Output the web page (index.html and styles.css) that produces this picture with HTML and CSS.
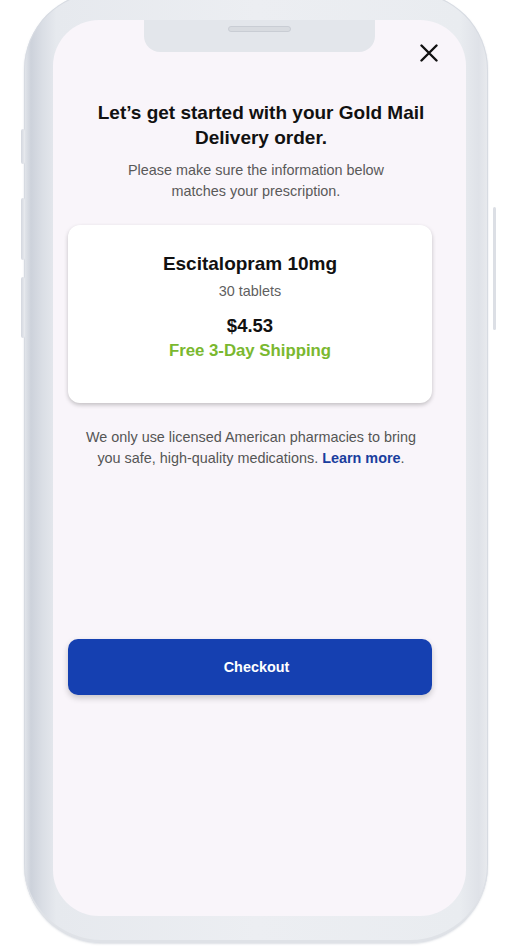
FILE: index.html
```html
<!DOCTYPE html>
<html lang="en">
<head>
<meta charset="utf-8">
<title>Gold Mail Delivery</title>
<link rel="stylesheet" href="styles.css">
</head>
<body>
<div class="phone">
  <span class="side-btn side-btn--1"></span>
  <span class="side-btn side-btn--2"></span>
  <span class="side-btn side-btn--3"></span>
  <span class="side-btn side-btn--r"></span>
  <div class="screen">
    <div class="notch"><span class="speaker"></span></div>
    <div class="topbar">
      <button class="close" aria-label="Close">
        <svg width="18" height="18" viewBox="0 0 18 18"><path d="M1.5 1.5 L16.5 16.5 M16.5 1.5 L1.5 16.5" stroke="#111" stroke-width="2.4" stroke-linecap="round"/></svg>
      </button>
    </div>
    <div class="content">
      <h1 class="title">Let’s get started with your Gold Mail Delivery order.</h1>
      <p class="subtitle">Please make sure the information below matches your prescription.</p>
      <div class="card">
        <div class="drug">Escitalopram 10mg</div>
        <div class="qty">30 tablets</div>
        <div class="price">$4.53</div>
        <div class="ship">Free 3-Day Shipping</div>
      </div>
      <p class="note">We only use licensed American pharmacies to bring you safe, high-quality medications. <a class="learn" href="#">Learn more</a>.</p>
      <button class="checkout">Checkout</button>
    </div>
  </div>
</div>
</body>
</html>
```
FILE: styles.css
```css
* { box-sizing: border-box; }
html, body { margin: 0; padding: 0; background: #ffffff; overflow: hidden; }
body { font-family: "Liberation Sans", Arial, sans-serif; width: 519px; height: 946px; }

.phone {
  position: relative;
  width: 464px;
  height: 951px;
  margin: -8px 0 0 24px;
  padding: 28px 22px 27px 29px;
  border-radius: 78px;
  background: linear-gradient(90deg, #e4e7ec 0%, #cdd2db 1.5%, #dadee5 4%, #e6e9ee 7%, #eceef2 50%, #e9ecf0 94%, #dfe2e8 98%, #e8eaee 100%);
  box-shadow: inset 0 -3px 0 #dfe2e7, inset 0 0 0 1px #d7dbe2, 0 1px 2px rgba(120,130,150,0.25);
}

.side-btn {
  position: absolute;
  width: 4px;
  background: linear-gradient(90deg, #d3d7df, #e9ebef);
  border-radius: 2px;
}
.side-btn--1 { left: -3px; top: 137px; height: 35px; }
.side-btn--2 { left: -3px; top: 206px; height: 62px; }
.side-btn--3 { left: -3px; top: 285px; height: 61px; }
.side-btn--r { right: -8px; top: 215px; height: 123px; width: 3px; background: #dcdfe5; }

.screen {
  position: relative;
  width: 100%;
  height: 100%;
  background: #f9f5fa;
  border-radius: 46px;
  overflow: hidden;
  padding-top: 24px;
}

.notch {
  position: absolute;
  left: 91px;
  top: 0;
  width: 231px;
  height: 32px;
  background: #e3e6eb;
  border-radius: 0 0 16px 16px;
  display: flex;
  justify-content: center;
  padding-top: 6px;
}
.speaker {
  width: 63px;
  height: 6px;
  border-radius: 3px;
  background: #d8dbe0;
  border: 1px solid #c9cdd4;
}

.topbar {
  display: flex;
  justify-content: flex-end;
  padding-right: 28px;
  height: 18px;
}
.close {
  width: 18px;
  height: 18px;
  padding: 0;
  border: 0;
  background: none;
  display: block;
}
.close svg { display: block; }

.content {
  width: 364px;
  margin-left: 15px;
  text-align: center;
}

.title {
  margin: 38px 0 0;
  padding: 0 0 0 22px;
  font-size: 19px;
  line-height: 25px;
  font-weight: 700;
  color: #111111;
}

.subtitle {
  margin: 10px 0 0;
  padding: 0 38px 0 50px;
  font-size: 14.4px;
  line-height: 21px;
  color: #595959;
}

.card {
  margin-top: 23px;
  background: #ffffff;
  border-radius: 12px;
  padding: 27px 0 41px;
  box-shadow: 0 2px 4px rgba(0,0,0,0.22);
}
.drug {
  font-size: 19px;
  line-height: 24px;
  font-weight: 700;
  color: #111111;
}
.qty {
  margin-top: 5px;
  font-size: 14.4px;
  line-height: 20px;
  color: #5f5f5f;
}
.price {
  margin-top: 13px;
  font-size: 18.5px;
  line-height: 24px;
  font-weight: 700;
  color: #111111;
}
.ship {
  margin-top: 2px;
  font-size: 16.8px;
  line-height: 22px;
  font-weight: 700;
  color: #7ab82f;
}

.note {
  margin: 24px 0 0;
  padding: 0 8px 0 10px;
  font-size: 14.4px;
  line-height: 21px;
  color: #555555;
}
.learn {
  color: #1a3e9e;
  font-weight: 700;
  text-decoration: none;
}

.checkout {
  display: block;
  width: 100%;
  height: 56px;
  margin-top: 170px;
  padding: 0 0 0 13px;
  border: 0;
  border-radius: 10px;
  background: #1540b1;
  color: #ffffff;
  font-family: "Liberation Sans", Arial, sans-serif;
  font-size: 14.4px;
  font-weight: 700;
  box-shadow: 0 3px 6px rgba(0,0,0,0.2);
}
```
